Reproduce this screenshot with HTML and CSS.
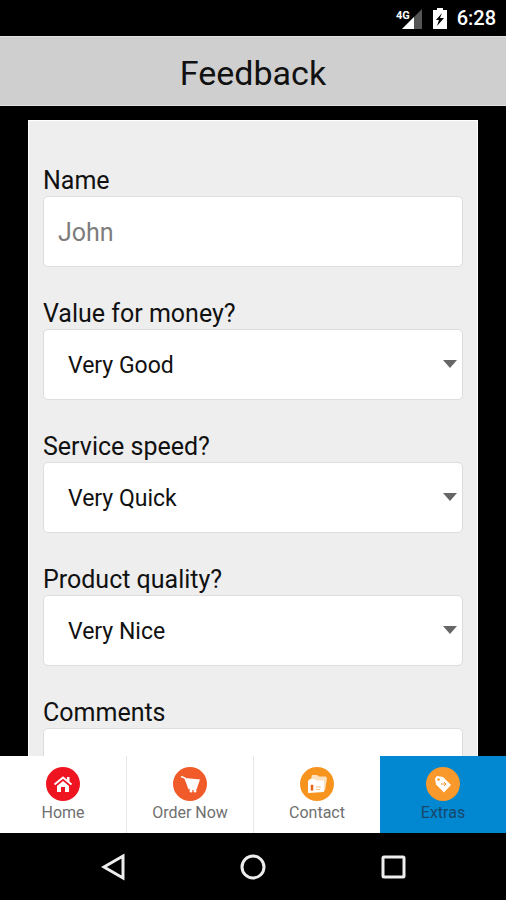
FILE: index.html
```html
<!DOCTYPE html>
<html lang="en">
<head>
    <meta charset="utf-8">
    <meta name="viewport" content="width=device-width, initial-scale=1">
    <title>Feedback</title>
    <link rel="stylesheet" href="styles.css">
</head>
<body>
    <div class="status-bar">
        <svg class="signal" width="28" height="24" viewBox="0 0 28 24" aria-hidden="true">
            <path d="M27 3V23H7z" fill="#555"/>
            <path d="M19 11V23H7z" fill="#fff"/>
            <text class="signal-text" x="1" y="13">4G</text>
        </svg>
        <svg class="battery" width="14" height="21" viewBox="0 0 14 21" aria-hidden="true">
            <path d="M4 0h6v2h4v19H0V2h4z" fill="#fff"/>
            <path d="M9 5L3 12h3l-2 6 7-8H7z" fill="#000"/>
        </svg>
        <span class="clock">6:28</span>
    </div>

    <header class="header">
        <h1 class="panel-title">Feedback</h1>
    </header>

    <main class="content">
        <form class="card">
            <div class="field">
                <label for="name">Name</label>
                <input class="control" type="text" id="name" placeholder="John">
            </div>

            <div class="field">
                <label for="value">Value for money?</label>
                <div class="select-wrap">
                    <select class="control" id="value">
                        <option>Very Good</option>
                        <option>Good</option>
                        <option>Poor</option>
                    </select>
                </div>
            </div>

            <div class="field">
                <label for="speed">Service speed?</label>
                <div class="select-wrap">
                    <select class="control" id="speed">
                        <option>Very Quick</option>
                        <option>Quick</option>
                        <option>Slow</option>
                    </select>
                </div>
            </div>

            <div class="field">
                <label for="quality">Product quality?</label>
                <div class="select-wrap">
                    <select class="control" id="quality">
                        <option>Very Nice</option>
                        <option>Nice</option>
                        <option>Poor</option>
                    </select>
                </div>
            </div>

            <div class="field">
                <label for="comments">Comments</label>
                <textarea class="control" id="comments"></textarea>
            </div>
        </form>
    </main>

    <nav class="tabs">
        <a class="tab" href="#home">
            <svg width="34" height="34" viewBox="0 0 34 34" aria-hidden="true">
                <circle cx="17" cy="17" r="17" fill="#ee1520"/>
                <path d="M8.500 17.500L17 10.500l8.500 7" fill="none" stroke="#fff" stroke-width="2"/>
                <path d="M21 10h2.500v5L21 13z" fill="#fff"/>
                <path d="M11 19l6-5 6 5v6h-4v-5h-4v5h-4z" fill="#fff"/>
            </svg>
            <span>Home</span>
        </a>
        <a class="tab" href="#order">
            <svg width="34" height="34" viewBox="0 0 34 34" aria-hidden="true">
                <circle cx="17" cy="17" r="17" fill="#f15a29"/>
                <path d="M8 9.500l4 1.500 4 10.500h8" fill="none" stroke="#fff" stroke-width="1.500"/>
                <path d="M12 11l15 1.500-3 8.500h-8.500z" fill="#fff"/>
                <path d="M17 21h6v2h-6z" fill="#fff"/>
                <circle cx="18" cy="24" r="1.500" fill="#fff"/>
                <circle cx="22" cy="24" r="1.500" fill="#fff"/>
            </svg>
            <span>Order Now</span>
        </a>
        <a class="tab" href="#contact">
            <svg width="34" height="34" viewBox="0 0 34 34" aria-hidden="true">
                <circle cx="17" cy="17" r="17" fill="#f7941e"/>
                <path d="M11 12l1-4h5l2 1.500h7l1 2-2 12-3 1z" fill="#fde0bd"/>
                <path d="M8 14l2-2h5l1 1.500h8V25l-16 1z" fill="#fff"/>
                <circle cx="12" cy="19" r="1.500" fill="#e8641b"/>
                <path d="M11 20h2l.5 3.500h-3z" fill="#e8641b"/>
                <path d="M16 20h5M16 22.500h4" stroke="#f7c48d" stroke-width="1"/>
            </svg>
            <span>Contact</span>
        </a>
        <a class="tab active" href="#extras">
            <svg width="34" height="34" viewBox="0 0 34 34" aria-hidden="true">
                <circle cx="17" cy="17" r="17" fill="#f9982b"/>
                <path d="M9 11.500L11 9l6 1 8 8-7 7.500-8-8z" fill="#fff"/>
                <circle cx="12.500" cy="12.500" r="1.300" fill="#f9982b"/>
                <path d="M15 17h5M18 15l2 2-2 2" fill="none" stroke="#f9982b" stroke-width="1"/>
            </svg>
            <span>Extras</span>
        </a>
    </nav>

    <div class="system-nav">
        <button type="button" aria-label="Back">
            <svg width="28" height="28" viewBox="0 0 28 28"><path d="M24 3V25L5 14z"/></svg>
        </button>
        <button type="button" aria-label="Home">
            <svg width="28" height="28" viewBox="0 0 28 28"><circle cx="14" cy="14" r="11"/></svg>
        </button>
        <button type="button" aria-label="Recent apps">
            <svg width="28" height="28" viewBox="0 0 28 28"><rect x="4" y="4" width="21" height="20" rx="1"/></svg>
        </button>
    </div>
</body>
</html>
```
FILE: styles.css
```css
* {
    box-sizing: border-box;
}

body {
    margin: 0;
    height: 100vh;
    display: flex;
    flex-direction: column;
    background-color: #000;
    color: #111;
    font-family: Roboto, sans-serif;
    overflow: hidden;
}

.status-bar {
    display: flex;
    justify-content: flex-end;
    align-items: center;
    height: 36px;
    padding: 0 10px;
    color: #fff;
    flex-shrink: 0;
}

.signal {
    margin-right: 10px;
}

.signal-text {
    font-size: 11px;
    font-weight: bold;
    fill: #fff;
    stroke: #000;
    stroke-width: 2px;
    paint-order: stroke;
}

.battery {
    margin-right: 10px;
}

.clock {
    font-size: 20px;
    font-weight: 500;
    line-height: 36px;
}

.header {
    flex-shrink: 0;
    padding-top: 4px;
    background-color: #cfcfcf;
    border-top: 1px solid #e2e2e2;
    border-bottom: 1px solid #e2e2e2;
    text-align: center;
}

.panel-title {
    margin: 0;
    font-size: 34px;
    font-weight: normal;
    line-height: 64px;
}

.content {
    flex: 1;
    min-height: 0;
    overflow: hidden;
    padding: 14px 28px 0;
}

.card {
    display: flex;
    flex-direction: column;
    gap: 32px;
    padding: 45px 14px;
    background-color: #eee;
    border: 1px solid #fff;
}

.field {
    display: flex;
    flex-direction: column;
}

.field label {
    font-size: 25px;
    line-height: 30px;
}

.control {
    display: block;
    width: 100%;
    height: 71px;
    margin: 0;
    padding: 2px 14px 0;
    border: 1px solid #ddd;
    border-radius: 5px;
    background-color: #fff;
    color: #111;
    font-family: inherit;
    font-size: 25px;
}

.control::placeholder {
    color: #7d7d7d;
}

.select-wrap {
    position: relative;
}

.select-wrap::after {
    content: "";
    position: absolute;
    right: 6px;
    top: 31px;
    border: 7px solid transparent;
    border-top: 8px solid #666;
    border-bottom: none;
    pointer-events: none;
}

select.control {
    appearance: none;
    padding: 2px 24px 0;
    font-size: 23px;
}

textarea.control {
    height: 140px;
    resize: none;
}

.tabs {
    display: flex;
    flex-shrink: 0;
    background-color: #fff;
}

.tab {
    flex: 1;
    display: flex;
    flex-direction: column;
    align-items: center;
    gap: 2px;
    padding: 11px 0;
    border-right: 1px solid #e6e6e6;
    color: #707070;
    font-size: 16px;
    line-height: 19px;
    text-decoration: none;
}

.tab:nth-child(n+3) {
    border-right: none;
}

.tab.active {
    background-color: #0288d1;
    color: #17476b;
}

.system-nav {
    display: flex;
    justify-content: center;
    align-items: center;
    gap: 112px;
    height: 67px;
    flex-shrink: 0;
}

.system-nav button {
    display: flex;
    padding: 0;
    border: none;
    background: none;
    cursor: pointer;
}

.system-nav svg {
    fill: none;
    stroke: #eee;
    stroke-width: 3;
}
```
